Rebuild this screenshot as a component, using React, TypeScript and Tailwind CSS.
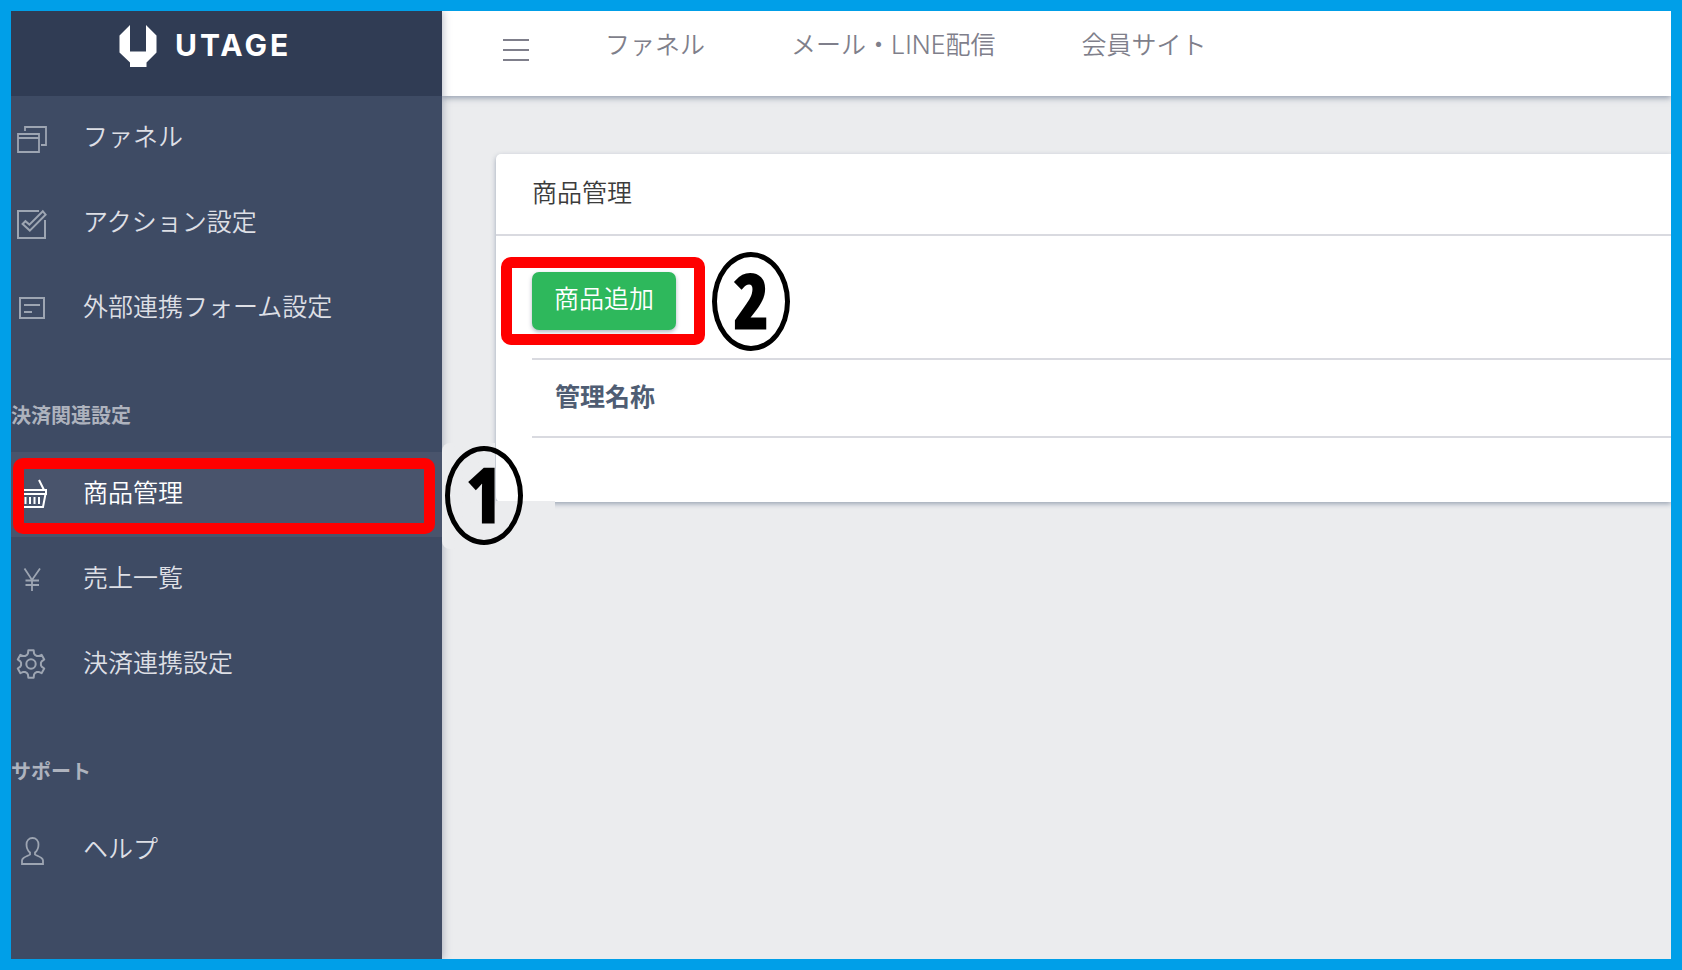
import type { ReactNode } from "react";

const GEAR_PATH = (() => {
  const points: string[] = [];
  const at = (deg: number, r: number) => {
    const a = ((deg - 90) * Math.PI) / 180;
    return `${(16 + r * Math.cos(a)).toFixed(2)} ${(15 + r * Math.sin(a)).toFixed(2)}`;
  };
  for (let tooth = 0; tooth < 6; tooth++) {
    const c = tooth * 60;
    points.push(`${at(c - 11, 14)}`, `${at(c + 11, 14)}`, `${at(c + 16, 11)}`, `${at(c + 23, 10)}`, `${at(c + 37, 10)}`, `${at(c + 44, 11)}`);
  }
  return `M${points.join("L")}Z`;
})();

function Icon({ children }: { children: ReactNode }) {
  return (
    <svg
      viewBox="0 0 32 32"
      className="size-8 shrink-0"
      fill="none"
      stroke="currentColor"
      strokeWidth="2"
      aria-hidden="true"
    >
      {children}
    </svg>
  );
}

const icons = {
  funnel: (
    <Icon>
      <path d="M3 11H24V29H3ZM3 15H24M10 8V4H31V22H26" strokeWidth="1.8" />
    </Icon>
  ),
  action: (
    <Icon>
      <path d="M24 3H3V30H30V12" />
      <path d="M7.6 16L10.4 13.2L14.4 16.6L27.8 3.2L30.6 6.6L14.8 22.6Z" />
    </Icon>
  ),
  form: (
    <Icon>
      <path d="M5 5H29V25H5ZM9 12H25M9 19H17" />
    </Icon>
  ),
  basket: (
    <Icon>
      <path d="M8 1L3 11M24 1L29 11M1 11H31V15H1ZM1.5 15L4 28H28L30.5 15M10.5 18V25M15 18V25M19.5 18V25M24 18V25" />
    </Icon>
  ),
  yen: (
    <Icon>
      <path d="M9.5 4.5L17 16L25 4.5M17 16V27M10.5 16.5H24M10.5 21H24" strokeWidth="1.8" />
    </Icon>
  ),
  gear: (
    <Icon>
      <path d={GEAR_PATH} strokeLinejoin="round" />
      <circle cx="16" cy="15" r="4.7" />
    </Icon>
  ),
  person: (
    <Icon>
      <path
        d="M7 29V25.5C7 23.5 8.5 22.7 15 19.5V17.5C12.5 15.5 11.5 12.5 11.5 9.5C11.5 5.5 14 3 17.5 3S23.5 5.5 23.5 9.5C23.5 12.5 22.5 15.5 20 17.5V19.5C26.5 22.7 28 23.5 28 25.5V29Z"
        strokeWidth="1.8"
      />
    </Icon>
  ),
};

function StepNumber({ value }: { value: string }) {
  return (
    <span className="flex h-[99px] w-[78px] items-center justify-center rounded-[50%] border-[5px] border-black pb-1 font-['Open_Sans_Condensed','Open_Sans',sans-serif] text-[74px] leading-none font-extrabold text-black [-webkit-text-stroke:3px_#000]">
      {value}
    </span>
  );
}

function NavItem({
  icon,
  label,
  active = false,
  children,
}: {
  icon: ReactNode;
  label: string;
  active?: boolean;
  children?: ReactNode;
}) {
  return (
    <li className="relative">
      <a
        href="#"
        aria-current={active ? "page" : undefined}
        className={
          active
            ? "flex h-[85px] items-center gap-9 bg-[#49546c] pl-1 text-white"
            : "flex h-[85px] items-center gap-9 pl-1 text-[#9da5b2]"
        }
      >
        {icon}
        <span className={active ? "pb-1 text-white" : "pb-1 text-[#dddfe5]"}>{label}</span>
      </a>
      {children}
    </li>
  );
}

function NavHeading({ children }: { children: ReactNode }) {
  return <h2 className="h-[101px] pt-[50px] text-[20px] leading-[30px] font-bold text-[#aeb3be]">{children}</h2>;
}

function Sidebar() {
  return (
    <aside className="relative z-20 w-[431px] shrink-0 bg-[#3e4b64] shadow-[1px_0_8px_rgba(50,65,95,0.35)]">
      <a href="#" aria-label="UTAGE" className="flex h-[85px] items-start gap-[18px] bg-[#303c54] pt-[14px] pl-[108px] text-white">
        <svg viewBox="0 0 38 42" className="h-[42px] w-[38px]" fill="currentColor" aria-hidden="true">
          <path d="M11 0V26.5H27V0L37.5 10.5V27.5L27.5 37.5V42H11V37.5L.5 27.5V10.5Z" />
        </svg>
        <span className="text-[30px] leading-[40px] font-bold tracking-widest">UTAGE</span>
      </a>
      <nav aria-label="メインメニュー">
        <ul>
          <NavItem icon={icons.funnel} label="ファネル" />
          <NavItem icon={icons.action} label="アクション設定" />
          <NavItem icon={icons.form} label="外部連携フォーム設定" />
        </ul>
        <NavHeading>決済関連設定</NavHeading>
        <ul>
          <NavItem icon={icons.basket} label="商品管理" active>
            <div className="pointer-events-none absolute top-[6px] left-[2px] h-[76px] w-[422px] rounded-[10px] border-[11px] border-[#ff0000]" />
            <div className="pointer-events-none absolute -top-[9px] left-full rounded-lg bg-linear-to-r from-[#ebecee] from-65% to-transparent to-65% pt-[3px] pb-1 pl-[3px]">
              <StepNumber value="1" />
            </div>
          </NavItem>
          <NavItem icon={icons.yen} label="売上一覧" />
          <NavItem icon={icons.gear} label="決済連携設定" />
        </ul>
        <NavHeading>サポート</NavHeading>
        <ul>
          <NavItem icon={icons.person} label="ヘルプ" />
        </ul>
      </nav>
    </aside>
  );
}

function TopBar() {
  return (
    <header className="relative z-10 flex h-[85px] items-start bg-white pt-4 pl-[61px] text-[#7f7f8b] shadow-[0_2px_6px_rgba(60,80,110,0.5)]">
      <button type="button" aria-label="メニュー" className="mt-[11px] mr-[76px]">
        <svg viewBox="0 0 26 24" className="h-6 w-[26px]" fill="none" stroke="currentColor" strokeWidth="2" aria-hidden="true">
          <path d="M0 2H26M0 12H26M0 22H26" />
        </svg>
      </button>
      <nav aria-label="サービス" className="flex gap-[86px] whitespace-nowrap">
        <a href="#">ファネル</a>
        <a href="#">メール・LINE配信</a>
        <a href="#">会員サイト</a>
      </nav>
    </header>
  );
}

function ProductCard() {
  return (
    <section className="relative rounded-l-[5px] bg-white shadow-[0_2px_5px_rgba(60,80,110,0.45)]">
      <h1 className="border-b-2 border-[#d9dae0] pt-[21px] pb-[23px] pl-9 leading-[36px] text-[#3c3c3c]">商品管理</h1>
      <div className="pt-9 pl-9">
        <div className="relative w-fit">
          <button
            type="button"
            className="block h-[58px] rounded-[7px] bg-[#2eb85c] px-[22px] pb-1 text-white shadow-[0_2px_4px_rgba(60,75,100,0.4)]"
          >
            商品追加
          </button>
          <div className="pointer-events-none absolute -top-[15px] -left-[31px] h-[88px] w-[204px] rounded-[10px] border-[11px] border-[#ff0000]" />
          <div className="pointer-events-none absolute -top-5 left-[180px]">
            <StepNumber value="2" />
          </div>
        </div>
        <table className="mt-7 w-full border-collapse text-left">
          <thead>
            <tr className="border-y-2 border-[#d9dae0]">
              <th scope="col" className="px-[23px] pt-[19px] pb-[21px] font-bold text-[#4f5d73]">
                管理名称
              </th>
            </tr>
          </thead>
          <tbody>
            <tr>
              <td className="h-[65px]" />
            </tr>
          </tbody>
        </table>
      </div>
      <div className="absolute -bottom-[9px] left-0 h-[10px] w-[59px] bg-[#ebecee]" />
    </section>
  );
}

export default function App() {
  return (
    <div className="flex min-h-screen overflow-hidden border-[11px] border-[#009fe8] bg-[#ebecee] font-['Inter','Noto_Sans_CJK_JP',sans-serif] text-[25px] leading-[36px] font-[350]">
      <Sidebar />
      <div className="min-w-0 flex-1">
        <TopBar />
        <main className="pt-[58px] pl-[54px]">
          <ProductCard />
        </main>
      </div>
    </div>
  );
}
